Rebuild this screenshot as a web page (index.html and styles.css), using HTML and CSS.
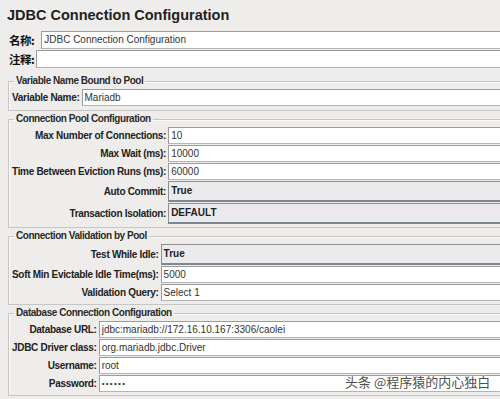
FILE: index.html
```html
<!DOCTYPE html>
<html lang="zh-CN">
<head>
    <meta charset="UTF-8">
    <meta name="viewport" content="width=device-width, initial-scale=1.0">
    <title>JDBC Connection Configuration</title>
    <link rel="stylesheet" href="styles.css">
</head>
<body>
    <div class="page">
        <h1 class="title">JDBC Connection Configuration</h1>

        <div class="meta-row name-row">
            <span class="cjk-label">名称:</span>
            <div class="field">JDBC Connection Configuration</div>
        </div>
        <div class="meta-row comment-row">
            <span class="cjk-label">注释:</span>
            <div class="field field-flat"></div>
        </div>

        <fieldset class="group group-first">
            <legend>Variable Name Bound to Pool</legend>
            <div class="form-grid">
                <label>Variable Name:</label><div class="field">Mariadb</div>
            </div>
        </fieldset>

        <fieldset class="group">
            <legend>Connection Pool Configuration</legend>
            <div class="form-grid">
                <label>Max Number of Connections:</label><div class="field">10</div>
                <label>Max Wait (ms):</label><div class="field">10000</div>
                <label>Time Between Eviction Runs (ms):</label><div class="field">60000</div>
                <label>Auto Commit:</label><div class="combo">True</div>
                <label>Transaction Isolation:</label><div class="combo">DEFAULT</div>
            </div>
        </fieldset>

        <fieldset class="group">
            <legend>Connection Validation by Pool</legend>
            <div class="form-grid">
                <label>Test While Idle:</label><div class="combo">True</div>
                <label>Soft Min Evictable Idle Time(ms):</label><div class="field">5000</div>
                <label>Validation Query:</label><div class="field">Select 1</div>
            </div>
        </fieldset>

        <fieldset class="group">
            <legend>Database Connection Configuration</legend>
            <div class="form-grid">
                <label>Database URL:</label><div class="field">jdbc:mariadb://172.16.10.167:3306/caolei</div>
                <label>JDBC Driver class:</label><div class="field">org.mariadb.jdbc.Driver</div>
                <label>Username:</label><div class="field">root</div>
                <label>Password:</label><div class="field password">••••••</div>
            </div>
        </fieldset>
    </div>

    <div class="watermark">头条 @程序猿的内心独白</div>
</body>
</html>
```

FILE: styles.css
```css
* {
    box-sizing: border-box;
}
body {
    margin: 0;
    background-color: #eeedeb;
    font-family: "Liberation Sans", Arial, sans-serif;
    color: #1e1e1e;
    overflow: hidden;
}
.page {
    width: 500px;
    padding: 6px 0 0 7px;
}
.title {
    margin: 0 0 7px;
    font-size: 14.5px;
    line-height: 18px;
    font-weight: bold;
    color: #222;
}
.meta-row {
    display: flex;
    align-items: center;
    height: 18px;
    margin-bottom: 1px;
}
.cjk-label {
    padding-left: 2px;
    font-family: "Noto Sans CJK SC", sans-serif;
    font-size: 11.5px;
    font-weight: bold;
    letter-spacing: -0.5px;
    color: #111;
}
.name-row .cjk-label {
    margin-right: 7px;
}
.comment-row .cjk-label {
    margin-right: 2px;
}
.meta-row .field {
    flex: 1;
    height: 18px;
}
.field-flat {
    border-color: #d6d6d6 #eee #c6c6c6 #eee;
}
/* the panels run on past the right edge of the window, so no right border */
.group {
    margin: 2px 0 0 1px;
    padding: 2px 0 3px 3px;
    border: 1px solid #c6c6c6;
    border-right: none;
    box-shadow: inset 1px 1px 0 #fafafa;
}
.group-first {
    margin-top: 7px;
    padding-bottom: 4px;
}
.group legend {
    margin-left: 2px;
    padding: 0 2px;
    font-size: 10px;
    line-height: 12px;
    font-weight: bold;
    letter-spacing: -0.45px;
    color: #2a2a2a;
}
.form-grid {
    display: grid;
    grid-template-columns: max-content 1fr;
    column-gap: 2px;
    row-gap: 1px;
    align-items: center;
}
.form-grid label {
    text-align: right;
    font-size: 10px;
    font-weight: bold;
    letter-spacing: -0.3px;
    color: #222;
}
.field {
    height: 17px;
    padding-left: 2px;
    background-color: #fff;
    border: 1px solid;
    border-color: #9c9c9c #d2d2d2 #b4b4b4 #9c9c9c;
    border-right: none;
    font-size: 10px;
    line-height: 15px;
    color: #333;
    white-space: nowrap;
}
.combo {
    height: 21px;
    padding-left: 2px;
    background-color: #ebebee;
    border: 1px solid;
    border-color: #8f8f8f #d0d0d4 #7d8891 #8f8f8f;
    border-bottom-width: 2px;
    border-right: none;
    font-size: 10px;
    font-weight: bold;
    line-height: 18px;
    color: #222;
}
.password {
    font-size: 8px;
    letter-spacing: 1.3px;
}
.watermark {
    position: absolute;
    left: 345px;
    top: 372px;
    font-family: "Noto Sans CJK SC", sans-serif;
    font-size: 13px;
    color: #505050;
    text-shadow: 0 0 1px #fff, 0 0 2px #fff;
}
```
